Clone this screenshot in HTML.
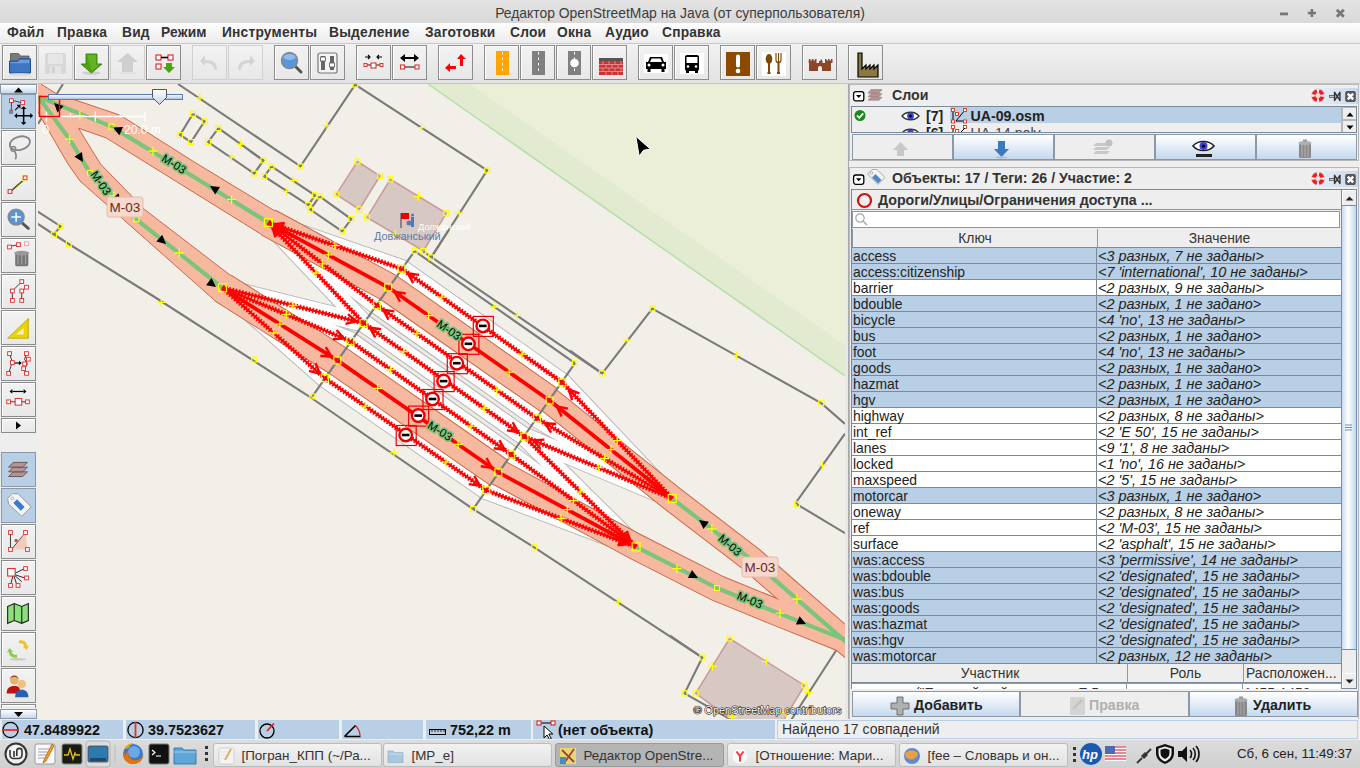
<!DOCTYPE html>
<html><head><meta charset="utf-8"><style>
*{box-sizing:border-box;margin:0;padding:0}
html,body{width:1360px;height:768px;overflow:hidden;background:#eeeeee;font-family:"Liberation Sans",sans-serif;position:relative}
.abs{position:absolute}
svg{display:block}
#title{left:0;top:0;width:1360px;height:23px;background:linear-gradient(#e4e4e4,#d8d8d8);color:#3c3c3c;font-size:13.9px;text-align:center;line-height:26px;padding-left:0}
#menu{left:0;top:23px;width:1360px;height:21px;background:linear-gradient(#fdfdfd,#ececec);border-bottom:1px solid #c8c8c8}
#menu span{position:absolute;top:2px;font-size:13.77px;font-weight:bold;color:#333;letter-spacing:0.2px}
#tb{left:0;top:44px;width:1360px;height:40px;background:linear-gradient(#f2f2f2,#e2e2e2);border-bottom:1px solid #c4c4c4}
.tbb{position:absolute;border:1px solid #8c8c8c;background:linear-gradient(#f2f2f2,#e8e8e8);box-shadow:inset 1px 1px 0 #fff}
.tbb.dis{border-color:#d0d0d0;box-shadow:none}
#lt{left:0;top:84px;width:38px;height:636px;background:#eeeeee}
.ltb{position:absolute;left:1px;width:35px;height:35px;border:1px solid #8c8c8c;background:linear-gradient(#f2f2f2,#e8e8e8);box-shadow:inset 1px 1px 0 #fff}
.ltb.act{background:#b8cfe5;border-color:#8a98a8;box-shadow:none}
.lsc{position:absolute;left:0;width:37px;border:1px solid #8a98a8;background:linear-gradient(#ffffff,#c5d9ee)}
#split{left:845px;top:84px;width:4px;height:636px;background:#e8e8e8;border-right:1px solid #a8a8a8}
.lbl{font-size:14.2px;font-weight:bold;color:#333;white-space:nowrap}
.th{background:#eeeeee;border-left:1px solid #8a98a8;border-bottom:1px solid #7a8a99;text-align:center;font-size:13.9px;color:#333;line-height:19px}
.tr{left:852px;width:489px;height:16px;border-bottom:1px solid #7a8a99;font-size:13.9px;color:#222;white-space:nowrap}
.tr .k{position:absolute;left:1px;top:0.5px;line-height:15px}
.tr .v{position:absolute;left:246px;top:0.5px;line-height:15px;font-style:italic;font-size:14.4px}
.sbb{background:#eeeeee;border:1px solid #b8b8b8}
.sf{position:absolute;top:720px;height:19px;background:#b8cfe5}
.sf span{position:absolute;top:1px;font-size:14.4px;font-weight:bold;color:#111;line-height:19px;white-space:nowrap}
</style></head><body>
<div id="title" class="abs">Редактор OpenStreetMap на Java (от суперпользователя)</div>
<svg class="abs" style="left:1270px;top:0px" width="90" height="22"><path d="M10 13.9h8" stroke="#777" stroke-width="2.8"/><path d="M37.8 13h8.2M41.9 8.9v8.2" stroke="#777" stroke-width="2.6"/><path d="M66.8 9.8l7 7M73.8 9.8l-7 7" stroke="#777" stroke-width="2.8"/></svg>
<div id="menu" class="abs">
<span style="left:7px">Файл</span><span style="left:57px">Правка</span><span style="left:122px">Вид</span><span style="left:161px">Режим</span><span style="left:222px">Инструменты</span><span style="left:329px">Выделение</span><span style="left:425px">Заготовки</span><span style="left:510px">Слои</span><span style="left:557px">Окна</span><span style="left:605px">Аудио</span><span style="left:662px">Справка</span>
</div>
<div id="tb" class="abs"></div>
<div class="tbb" style="left:2px;top:45px;width:35px;height:35px"><svg width="33" height="33" viewBox="0 0 33 33"><path d="M7.5 7.5h8l2 2.5h8.5v8H7.5z" fill="#7a7a7a" stroke="#555" stroke-width="0.8"/>
<path d="M6.5 15h8l2-2.2h11V27h-21z" fill="#3d76c2" stroke="#1f4f8f" stroke-width="1"/>
<path d="M7.5 16h7.2l2-2.2h9.8v3.5H7.5z" fill="#8ab4e6" opacity="0.6"/><ellipse cx="17" cy="28.5" rx="10" ry="1.3" fill="#d8d8d8"/></svg></div><div class="tbb dis" style="left:38px;top:45px;width:35px;height:35px"><svg width="33" height="33" viewBox="0 0 33 33"><rect x="6" y="7" width="21" height="21" rx="2" fill="#d8d8d8"/><rect x="9" y="8" width="15" height="10" fill="#e6e6e6"/><rect x="11" y="20" width="11" height="8" fill="#e4e4e4"/><rect x="13" y="21" width="3" height="6" fill="#d2d2d2"/></svg></div><div class="tbb" style="left:74px;top:45px;width:35px;height:35px"><svg width="33" height="33" viewBox="0 0 33 33"><ellipse cx="16.5" cy="27" rx="9" ry="1.8" fill="#ccc"/><path d="M11 8h11v10h5l-10.5 9L6 18h5z" fill="#4fa313" stroke="#3a7d10" stroke-width="0.9"/><path d="M12 9h9v10h3l-7 6z" fill="#6cc22a" opacity="0.6"/></svg></div><div class="tbb dis" style="left:110px;top:45px;width:35px;height:35px"><svg width="33" height="33" viewBox="0 0 33 33"><ellipse cx="16.5" cy="27" rx="9" ry="1.8" fill="#e2e2e2"/><path d="M11 26h11V16h5L16.5 7 6 16h5z" fill="#cfcfcf"/></svg></div><div class="tbb" style="left:146px;top:45px;width:35px;height:35px"><svg width="33" height="33" viewBox="0 0 33 33"><rect x="9" y="9" width="5" height="5" fill="#fff" stroke="#d33" stroke-width="1.2"/><rect x="21" y="9" width="5" height="5" fill="#fff" stroke="#d33" stroke-width="1.2"/><path d="M14 11.5h7" stroke="#000" stroke-width="1.6"/><rect x="9" y="18" width="5" height="5" fill="#fff" stroke="#d33" stroke-width="1.2"/><path d="M19 17h6v4h3l-6 6-6-6h3z" fill="#4fa313"/></svg></div><div class="tbb dis" style="left:192px;top:45px;width:35px;height:35px"><svg width="33" height="33" viewBox="0 0 33 33"><path d="M12 9l-5 6 5 5v-3c5 0 8 1 9 6 1 1 2 2 3 0 0-6-4-9-12-9z" fill="#d4d4d4"/></svg></div><div class="tbb dis" style="left:228px;top:45px;width:35px;height:35px"><svg width="33" height="33" viewBox="0 0 33 33"><path d="M21 9l5 6-5 5v-3c-5 0-8 1-9 6-1 1-2 2-3 0 0-6 4-9 12-9z" fill="#d4d4d4"/></svg></div><div class="tbb" style="left:274px;top:45px;width:35px;height:35px"><svg width="33" height="33" viewBox="0 0 33 33"><line x1="20" y1="20" x2="26" y2="26" stroke="#555" stroke-width="3" stroke-linecap="round"/><circle cx="14.5" cy="14.5" r="8" fill="#5a95db" stroke="#888" stroke-width="1.5"/><ellipse cx="14.5" cy="11" rx="6" ry="3" fill="#a8ccf2" opacity="0.7"/></svg></div><div class="tbb" style="left:310px;top:45px;width:35px;height:35px"><svg width="33" height="33" viewBox="0 0 33 33"><rect x="7" y="7" width="19" height="20" rx="2" fill="#f4f4f4" stroke="#777" stroke-width="1.2"/><rect x="10" y="10" width="4" height="14" fill="#666"/><rect x="19" y="10" width="4" height="14" fill="#666"/><rect x="9.5" y="11" width="5" height="4" fill="#fff" stroke="#555" stroke-width="0.8"/><rect x="18.5" y="17" width="5" height="4" fill="#fff" stroke="#555" stroke-width="0.8"/></svg></div><div class="tbb" style="left:356px;top:45px;width:35px;height:35px"><svg width="33" height="33" viewBox="0 0 33 33"><path d="M8 11h5M11 9l2 2-2 2M25 11h-5M22 9l-2 2 2 2" stroke="#000" stroke-width="1.1" fill="none"/><path d="M9 19h15" stroke="#222" stroke-width="1"/><rect x="7" y="17.5" width="3" height="3" fill="#fff" stroke="#d33" stroke-width="1"/><rect x="14" y="17" width="5" height="5" fill="#fff" stroke="#d33" stroke-width="1.1"/><rect x="23" y="17.5" width="3" height="3" fill="#fff" stroke="#d33" stroke-width="1"/></svg></div><div class="tbb" style="left:392px;top:45px;width:35px;height:35px"><svg width="33" height="33" viewBox="0 0 33 33"><path d="M10 12h14" stroke="#000" stroke-width="2"/><path d="M7 12l5-4v8zM26 12l-5-4v8z" fill="#000"/><path d="M10 21h13" stroke="#111" stroke-width="1"/><rect x="7.5" y="19" width="4" height="4" fill="#fff" stroke="#d33" stroke-width="1.1"/><rect x="22" y="19" width="4" height="4" fill="#fff" stroke="#d33" stroke-width="1.1"/></svg></div><div class="tbb" style="left:438px;top:45px;width:35px;height:35px"><svg width="33" height="33" viewBox="0 0 33 33"><path d="M22 8l-4 5h3v7h3v-7h3z" fill="#f00"/><path d="M6 22l5 4v-3h6v-3h-6v-3z" fill="#f00"/></svg></div><div class="tbb" style="left:484px;top:45px;width:35px;height:35px"><svg width="33" height="33" viewBox="0 0 33 33"><rect x="11" y="5" width="13" height="24" fill="#ffa500"/><path d="M17.5 6v22" stroke="#fff" stroke-width="1" stroke-dasharray="2.5 3"/></svg></div><div class="tbb" style="left:520px;top:45px;width:35px;height:35px"><svg width="33" height="33" viewBox="0 0 33 33"><rect x="11" y="5" width="13" height="24" fill="#808080"/><path d="M17.5 6v22" stroke="#fff" stroke-width="1" stroke-dasharray="2.5 3"/></svg></div><div class="tbb" style="left:556px;top:45px;width:35px;height:35px"><svg width="33" height="33" viewBox="0 0 33 33"><rect x="11" y="5" width="13" height="24" fill="#808080"/><path d="M17.5 6v22" stroke="#fff" stroke-width="1" stroke-dasharray="2.5 3"/><circle cx="17.5" cy="17" r="4.3" fill="#fff"/></svg></div><div class="tbb" style="left:592px;top:45px;width:35px;height:35px"><svg width="33" height="33" viewBox="0 0 33 33"><rect x="6" y="12" width="24" height="3" fill="#555"/><rect x="6" y="15" width="24" height="14" fill="#c33"/><path d="M6 18.5h24M6 22h24M6 25.5h24" stroke="#e8a0a0" stroke-width="0.8"/><path d="M10 15v3.5M16 15v3.5M22 15v3.5M28 15v3.5M13 18.5v3.5M19 18.5v3.5M25 18.5v3.5M10 22v3.5M16 22v3.5M22 22v3.5M28 22v3.5M13 25.5v3.5M19 25.5v3.5M25 25.5v3.5" stroke="#e8a0a0" stroke-width="0.8"/></svg></div><div class="tbb" style="left:638px;top:45px;width:35px;height:35px"><svg width="33" height="33" viewBox="0 0 33 33"><rect x="5" y="8" width="24" height="19" fill="#fff"/><path d="M9 16l2-5h12l2 5h2v7H7v-7z" fill="#000"/><path d="M11 16l1.5-3.5h9L23 16z" fill="#fff"/><circle cx="10" cy="19" r="1.5" fill="#fff"/><circle cx="24" cy="19" r="1.5" fill="#fff"/><rect x="8.5" y="23" width="3" height="3" fill="#000"/><rect x="22.5" y="23" width="3" height="3" fill="#000"/></svg></div><div class="tbb" style="left:674px;top:45px;width:35px;height:35px"><svg width="33" height="33" viewBox="0 0 33 33"><rect x="5" y="7" width="24" height="21" fill="#fff"/><rect x="10" y="9" width="14" height="16" rx="2" fill="#000"/><rect x="11.5" y="11" width="11" height="6" fill="#fff"/><circle cx="13" cy="20.5" r="1.3" fill="#fff"/><circle cx="21" cy="20.5" r="1.3" fill="#fff"/><rect x="11" y="24" width="3" height="3" fill="#000"/><rect x="20" y="24" width="3" height="3" fill="#000"/></svg></div><div class="tbb" style="left:720px;top:45px;width:35px;height:35px"><svg width="33" height="33" viewBox="0 0 33 33"><rect x="5" y="6" width="24" height="24" fill="#8b4a00"/><rect x="15" y="8.5" width="4" height="13" rx="2" fill="#fff"/><circle cx="17" cy="25" r="2.3" fill="#fff"/></svg></div><div class="tbb" style="left:756px;top:45px;width:35px;height:35px"><svg width="33" height="33" viewBox="0 0 33 33"><rect x="5" y="6" width="24" height="24" fill="#fff"/><ellipse cx="12" cy="13" rx="3.3" ry="5" fill="#7a4a0a"/><rect x="11" y="16" width="2" height="11" fill="#7a4a0a"/><rect x="10.5" y="26" width="3" height="2" fill="#7a4a0a"/><path d="M19 7v7c0 1.5 1 2.5 2 2.5h1c1 0 2-1 2-2.5V7" stroke="#7a4a0a" stroke-width="1.2" fill="none"/><path d="M21.5 7v8" stroke="#7a4a0a" stroke-width="1.1"/><rect x="20.5" y="15" width="2" height="12" fill="#7a4a0a"/><rect x="20" y="26" width="3" height="2" fill="#7a4a0a"/></svg></div><div class="tbb" style="left:802px;top:45px;width:35px;height:35px"><svg width="33" height="33" viewBox="0 0 33 33"><path d="M6 13h1.5v1.5H9V13h1.5v1.5H12V13h1.5v4h2.5v-2h1.5v-1.5H19V15h.5v2H22v-4h1.5v1.5H25V13h1.5v1.5H28V13h1.5v4H28v8H6v-8h-.5z" fill="#8b4726"/><path d="M15 25v-3a2 2 0 0 1 4 0v3z" fill="#eee"/></svg></div><div class="tbb" style="left:848px;top:45px;width:35px;height:35px"><svg width="33" height="33" viewBox="0 0 33 33"><path d="M9 7h4v16l4-4v4l4-4v4l4-4v4l4-4v12H9z" fill="#8b7a40" stroke="#000" stroke-width="1.2"/></svg></div>
<div id="lt" class="abs"></div>
<div class="ltb act" style="top:94px"><svg width="32" height="32" viewBox="0 0 34 34"><rect x="8" y="4" width="4" height="4" fill="#fff" stroke="#d33" stroke-width="1"/><rect x="20" y="6" width="4" height="4" fill="#fff" stroke="#d33" stroke-width="1"/><path d="M12 6l8 2M10 8v8" stroke="#333" stroke-width="0.9"/><rect x="8" y="16" width="3.5" height="3.5" fill="#888" stroke="#666" stroke-width="0.6"/><path d="M14 16l5-5M16 11h3v3" stroke="#000" stroke-width="1.2" fill="none"/><path d="M23 14v16M15 22h16" stroke="#000" stroke-width="1.6"/><path d="M23 12l-3 3h6zM23 32l-3-3h6zM13 22l3-3v6zM33 22l-3-3v6z" fill="#000"/></svg></div><div class="ltb" style="top:130px"><svg width="32" height="32" viewBox="0 0 34 34"><ellipse cx="19" cy="13" rx="11" ry="7" fill="none" stroke="#888" stroke-width="2" transform="rotate(-15 19 13)"/><circle cx="12" cy="19" r="2.5" fill="none" stroke="#888" stroke-width="1.5"/><path d="M13 21c2 3 3 6 1 9" stroke="#888" stroke-width="1.8" fill="none"/></svg></div><div class="ltb" style="top:166px"><svg width="32" height="32" viewBox="0 0 34 34"><path d="M9 26L25 12" stroke="#000" stroke-width="1.5"/><path d="M9 26L25 12" stroke="#ee0" stroke-width="0.6"/><rect x="21" y="8" width="7" height="7" fill="#ff8"/><rect x="22.5" y="9.5" width="4" height="4" fill="#fff" stroke="#d33" stroke-width="1.1"/><rect x="6.5" y="24" width="4" height="4" fill="#fff" stroke="#d33" stroke-width="1.1"/></svg></div><div class="ltb" style="top:202px"><svg width="32" height="32" viewBox="0 0 34 34"><line x1="20" y1="20" x2="28" y2="27" stroke="#555" stroke-width="3" stroke-linecap="round"/><circle cx="15" cy="15" r="8.5" fill="#5a95db" stroke="#888" stroke-width="1.5"/><path d="M15 10v10M10 15h10" stroke="#fff" stroke-width="1.6"/></svg></div><div class="ltb" style="top:238px"><svg width="32" height="32" viewBox="0 0 34 34"><rect x="14" y="15" width="14" height="14" rx="2" fill="#777"/><ellipse cx="21" cy="15" rx="8" ry="2.5" fill="#999"/><path d="M17 17v10M21 17v10M25 17v10" stroke="#aaa" stroke-width="1"/><path d="M8 8l9-2" stroke="#333" stroke-width="1"/><rect x="6" y="6.5" width="4" height="4" fill="#fff" stroke="#d33" stroke-width="1"/><rect x="15.5" y="4" width="4" height="4" fill="#fff" stroke="#d33" stroke-width="1"/><rect x="24" y="3" width="4" height="4" fill="#fff" stroke="#f99" stroke-width="1"/></svg></div><div class="ltb" style="top:274px"><svg width="32" height="32" viewBox="0 0 34 34"><path d="M11 17l10-10M21 17l5-4M11 17v10M21 17v10" stroke="#333" stroke-width="1"/><rect x="19" y="5" width="4" height="4" fill="#fff" stroke="#d33" stroke-width="1"/><rect x="24" y="11" width="4" height="4" fill="#fff" stroke="#d33" stroke-width="1"/><rect x="9" y="15" width="4" height="4" fill="#fff" stroke="#d33" stroke-width="1"/><rect x="19" y="15" width="4" height="4" fill="#fff" stroke="#d33" stroke-width="1"/><rect x="9" y="25" width="4" height="4" fill="#fff" stroke="#d33" stroke-width="1"/><rect x="19" y="25" width="4" height="4" fill="#fff" stroke="#d33" stroke-width="1"/></svg></div><div class="ltb" style="top:310px"><svg width="32" height="32" viewBox="0 0 34 34"><path d="M6 29L28 8v21z" fill="#e8d400" stroke="#b8a000" stroke-width="0.8"/><path d="M15 25l8-7v7z" fill="#eee"/></svg></div><div class="ltb" style="top:346px"><svg width="32" height="32" viewBox="0 0 34 34"><path d="M8 7l3 9-4 12M26 7l-2 6 3 5-3 5 2 5" stroke="#333" stroke-width="1" fill="none"/><path d="M13 17h7" stroke="#000" stroke-width="1.2"/><path d="M21 17l-3-2.5v5z" fill="#000"/><rect x="6" y="5" width="4" height="4" fill="#fff" stroke="#d33" stroke-width="1"/><rect x="9" y="14.5" width="4" height="4" fill="#fff" stroke="#d33" stroke-width="1"/><rect x="5" y="26" width="4" height="4" fill="#fff" stroke="#d33" stroke-width="1"/><rect x="24" y="5" width="4" height="4" fill="#fff" stroke="#d33" stroke-width="1"/><rect x="26" y="11" width="4" height="4" fill="#fff" stroke="#d33" stroke-width="1"/><rect x="22" y="16" width="4" height="4" fill="#fff" stroke="#d33" stroke-width="1"/><rect x="21" y="21" width="4" height="4" fill="#fff" stroke="#d33" stroke-width="1"/><rect x="24" y="26" width="4" height="4" fill="#fff" stroke="#d33" stroke-width="1"/></svg></div><div class="ltb" style="top:382px"><svg width="32" height="32" viewBox="0 0 34 34"><path d="M11 9h12" stroke="#000" stroke-width="1.3"/><path d="M8 9l3-2.5v5zM26 9l-3-2.5v5z" fill="#000"/><path d="M7 20h20" stroke="#333" stroke-width="1"/><rect x="5" y="18" width="4" height="4" fill="#fff" stroke="#d33" stroke-width="1"/><rect x="14" y="16.5" width="7" height="7" fill="#fff" stroke="#d33" stroke-width="1.1"/><rect x="25" y="18" width="4" height="4" fill="#fff" stroke="#d33" stroke-width="1"/></svg></div><div class="ltb act" style="top:452px"><svg width="32" height="32" viewBox="0 0 34 34"><path d="M7 25l5-5h15l-5 5z" fill="#b49494" stroke="#5a4a4a" stroke-width="0.9"/><path d="M7 20l5-5h15l-5 5z" fill="#b49494" stroke="#5a4a4a" stroke-width="0.9"/><path d="M7 15l5-5h15l-5 5z" fill="#b49494" stroke="#5a4a4a" stroke-width="0.9"/></svg></div><div class="ltb act" style="top:488px"><svg width="32" height="32" viewBox="0 0 34 34"><path d="M6 10l5-5h6l14 14-10 10L7 16z" fill="#f4f4f4" stroke="#999" stroke-width="1"/><circle cx="11" cy="10" r="1.5" fill="#fff" stroke="#999" stroke-width="0.8"/><path d="M12 15l8 8 4-4-8-8z" fill="#3a7cc8"/></svg></div><div class="ltb" style="top:524px"><svg width="32" height="32" viewBox="0 0 34 34"><path d="M9 8v18M25 8L10 26" stroke="#333" stroke-width="1"/><path d="M25 8l2 18H11z" fill="#f6c0b0" opacity="0.8"/><rect x="7" y="6" width="4" height="4" fill="#fff" stroke="#d33" stroke-width="1"/><rect x="23" y="6" width="4" height="4" fill="#fff" stroke="#d33" stroke-width="1"/><rect x="7" y="24" width="4" height="4" fill="#fff" stroke="#d33" stroke-width="1"/><rect x="25" y="24" width="4" height="4" fill="#fff" stroke="#d33" stroke-width="1"/><rect x="13.5" y="15" width="3" height="3" fill="#d33"/></svg></div><div class="ltb" style="top:560px"><svg width="32" height="32" viewBox="0 0 34 34"><path d="M12 14l12-6M12 14l12 4M12 14l-3 12M12 14l4 12M12 14l9 8" stroke="#222" stroke-width="1"/><rect x="6" y="8" width="8" height="8" fill="#fff" stroke="#d33" stroke-width="1.2"/><rect x="23" y="6" width="4" height="4" fill="#fff" stroke="#d33" stroke-width="1"/><rect x="24" y="16" width="4" height="4" fill="#fff" stroke="#d33" stroke-width="1"/><rect x="7" y="24" width="4" height="4" fill="#fff" stroke="#d33" stroke-width="1"/><rect x="15" y="24" width="4" height="4" fill="#fff" stroke="#d33" stroke-width="1"/></svg></div><div class="ltb" style="top:596px"><svg width="32" height="32" viewBox="0 0 34 34"><path d="M6 10l7-3 8 3 7-3v18l-7 3-8-3-7 3z" fill="#8be07a" stroke="#222" stroke-width="1.2"/><path d="M13 7v18M21 10v18" stroke="#222" stroke-width="1.2"/></svg></div><div class="ltb" style="top:632px"><svg width="32" height="32" viewBox="0 0 34 34"><path d="M18 8a7 7 0 0 1 9 6l2-1-3 5-4-4 2 .2a5 5 0 0 0-6-3z" fill="#f0c020"/><path d="M16 26a7 7 0 0 1-9-6l-2 1 3-5 4 4-2-.2a5 5 0 0 0 6 3z" fill="#8bd040"/><ellipse cx="17" cy="28" rx="9" ry="1.5" fill="#ccc"/></svg></div><div class="ltb" style="top:668px"><svg width="32" height="32" viewBox="0 0 34 34"><circle cx="13" cy="12" r="4.5" fill="#e8b070"/><path d="M8 12a5 5 0 0 1 10 0c0-5-10-5-10 0z" fill="#8a3a10"/><path d="M5 26c0-6 3-8 8-8s6 2 6 5v3z" fill="#c01010"/><circle cx="21" cy="16" r="4.5" fill="#f0c080"/><path d="M14 30c0-6 3-8 7-8s7 2 7 8z" fill="#2a60b0"/></svg></div><div class="lsc" style="top:84px;height:10px"><svg width="35" height="9"><path d="M13 7.5h9l-4.5-5z" fill="#000"/></svg></div><div class="ltb" style="top:418px;height:15px"><svg width="32" height="13"><path d="M14 2.5v8l5-4z" fill="#000"/></svg></div><div class="ltb" style="top:704px;height:4px;border-bottom:none"></div><div class="lsc" style="top:709px;height:10px"><svg width="35" height="9"><path d="M13 2h9l-4.5 5z" fill="#000"/></svg></div>
<svg class="abs" style="left:38px;top:84px" width="807" height="636" viewBox="38 84 807 636"><rect x="38" y="84" width="807" height="636" fill="#f2efe9"/><polygon points="428,84 845,84 845,376 " fill="#ecefd7"/><polygon points="428,84 470,84 845,345 845,376" fill="#e2ebcf"/><path d="M428 84L845 376" stroke="#b4dfa8" stroke-width="1.5"/><path d="M63.0,84.0 L38.0,124.0" stroke="#7a7a7a" stroke-width="2.1" fill="none"/><path d="M178.0,84.0 L300.5,166.4 L355.2,84.6 L487.2,170.4 L431.1,257.4" stroke="#7a7a7a" stroke-width="2.1" fill="none"/><path d="M218.4,128.2 L263.4,160.4 L254.3,173.5 L208.2,142.0 L218.4,128.2" stroke="#7a7a7a" stroke-width="2.1" fill="none"/><path d="M250.0,151.0 L263.4,160.4" stroke="#7a7a7a" stroke-width="2.1" fill="none"/><path d="M250.0,170.6 L254.3,173.5" stroke="#7a7a7a" stroke-width="2.1" fill="none"/><path d="M271.5,166.4 L315.1,195.3 L308.3,205.1 L264.3,176.4 L271.5,166.4" stroke="#7a7a7a" stroke-width="2.1" fill="none"/><path d="M319.6,196.4 L351.3,219.1 L342.2,231.4 L310.3,209.6 L319.6,196.4" stroke="#7a7a7a" stroke-width="2.1" fill="none"/><path d="M193.0,113.8 L204.6,121.3 L191.0,142.0 L180.0,135.0 L193.0,113.8" stroke="#7a7a7a" stroke-width="2.1" fill="none"/><path d="M37.0,211.0 L60.5,226.2 L54.0,234.5" stroke="#7a7a7a" stroke-width="2.1" fill="none"/><path d="M37.0,223.4 L54.0,234.5 L68.8,244.0 L153.0,296.0 L307.0,395.0 L473.2,509.1 L534.2,547.4 L702.3,657.5 L684.6,693.3 L727.3,717.7 L735.0,722.0" stroke="#7a7a7a" stroke-width="2.1" fill="none"/><path d="M670.0,635.6 L702.3,657.5" stroke="#7a7a7a" stroke-width="2.1" fill="none"/><path d="M414.6,251.0 L574.9,363.2" stroke="#7a7a7a" stroke-width="2.1" fill="none"/><path d="M423.2,251.3 L431.4,257.2 L601.9,373.4" stroke="#7a7a7a" stroke-width="2.1" fill="none"/><path d="M431.4,257.2 L448.7,230.0" stroke="#7a7a7a" stroke-width="2.1" fill="none"/><path d="M570.0,350.7 L602.3,373.4 L652.3,308.5 L821.2,403.2 L845.0,424.0" stroke="#7a7a7a" stroke-width="2.1" fill="none"/><path d="M845.0,433.6 L796.4,502.0 L797.0,504.3" stroke="#7a7a7a" stroke-width="2.1" fill="none"/><path d="M797.0,504.3 L845.0,533.2" stroke="#7a7a7a" stroke-width="2.1" fill="none"/><path d="M843.2,639.5 L791.1,720.0" stroke="#7a7a7a" stroke-width="2.1" fill="none"/><polygon points="357.4,161.5 380.0,176.0 359.3,209.4 336.3,194.4" fill="#d8c8c4" stroke="#c89c9a" stroke-width="1.6"/><polygon points="390.3,179.3 446.3,213.2 423.4,251.0 367.0,217.4" fill="#d8c8c4" stroke="#c89c9a" stroke-width="1.6"/><polygon points="729.5,638.5 804.5,685.4 783.3,720.5 732.5,720.5 695.7,693.3" fill="#d8c8c4" stroke="#c89c9a" stroke-width="1.6"/><g stroke="#b8b8b8" stroke-width="19.5" stroke-linecap="round" fill="none"><path d="M268.4 222.6L401.5 268.7" /><path d="M268.4 222.6L388.2 287.3" /><path d="M268.4 222.6L376.9 305.2" /><path d="M268.4 222.6L363.5 323.1" /><path d="M222.5 287.8L363.5 323.1" /><path d="M222.5 287.8L350.3 341.1" /><path d="M222.5 287.8L337.3 360.4" /><path d="M222.5 287.8L324.9 378.2" /><path d="M401.5 268.7L562.3 382.5" /><path d="M388.2 287.3L549.6 400.5" /><path d="M376.9 305.2L536.9 418.4" /><path d="M363.5 323.1L524.4 436.6" /><path d="M350.3 341.1L511.2 454.5" /><path d="M337.3 360.4L498.3 472.3" /><path d="M324.9 378.2L486.2 490.2" /><path d="M562.3 382.5L672.2 498.6" /><path d="M549.6 400.5L672.2 498.6" /><path d="M536.9 418.4L672.2 498.6" /><path d="M524.4 436.6L672.2 498.6" /><path d="M524.4 436.6L636.1 546.9" /><path d="M511.2 454.5L636.1 546.9" /><path d="M498.3 472.3L636.1 546.9" /><path d="M486.2 490.2L636.1 546.9" /></g><g stroke="#ffffff" stroke-width="17.5" stroke-linecap="round" fill="none"><path d="M268.4 222.6L401.5 268.7" /><path d="M268.4 222.6L388.2 287.3" /><path d="M268.4 222.6L376.9 305.2" /><path d="M268.4 222.6L363.5 323.1" /><path d="M222.5 287.8L363.5 323.1" /><path d="M222.5 287.8L350.3 341.1" /><path d="M222.5 287.8L337.3 360.4" /><path d="M222.5 287.8L324.9 378.2" /><path d="M401.5 268.7L562.3 382.5" /><path d="M388.2 287.3L549.6 400.5" /><path d="M376.9 305.2L536.9 418.4" /><path d="M363.5 323.1L524.4 436.6" /><path d="M350.3 341.1L511.2 454.5" /><path d="M337.3 360.4L498.3 472.3" /><path d="M324.9 378.2L486.2 490.2" /><path d="M562.3 382.5L672.2 498.6" /><path d="M549.6 400.5L672.2 498.6" /><path d="M536.9 418.4L672.2 498.6" /><path d="M524.4 436.6L672.2 498.6" /><path d="M524.4 436.6L636.1 546.9" /><path d="M511.2 454.5L636.1 546.9" /><path d="M498.3 472.3L636.1 546.9" /><path d="M486.2 490.2L636.1 546.9" /></g><g stroke="#b8b8b8" stroke-width="5" fill="none"><path d="M394.9 278.0L556.0 391.5"/><path d="M382.5 296.2L543.2 409.4"/><path d="M370.2 314.1L530.6 427.5"/><path d="M356.9 332.1L517.8 445.6"/><path d="M343.8 350.8L504.8 463.4"/><path d="M331.1 369.3L492.2 481.2"/></g><g stroke="#eeebe6" stroke-width="3" fill="none"><path d="M394.9 278.0L556.0 391.5"/><path d="M382.5 296.2L543.2 409.4"/><path d="M370.2 314.1L530.6 427.5"/><path d="M356.9 332.1L517.8 445.6"/><path d="M343.8 350.8L504.8 463.4"/><path d="M331.1 369.3L492.2 481.2"/></g><path d="M268.4,222.6 L388.2,287.3 L549.6,400.5" stroke="#c86848" stroke-width="29.5" fill="none" stroke-linejoin="miter" stroke-miterlimit="3"/><path d="M222.5,287.8 L337.3,360.4 L498.3,472.3" stroke="#c86848" stroke-width="31.5" fill="none" stroke-linejoin="miter" stroke-miterlimit="3"/><path d="M549.6,400.5 L672.2,498.6 L751.6,559.6 L842.3,638.6 L870.0,662.0" stroke="#c86848" stroke-width="26.5" fill="none" stroke-linejoin="miter" stroke-miterlimit="3"/><path d="M498.3,472.3 L636.1,546.9 L717.0,588.0 L779.6,613.6 L842.3,638.6 L870.0,650.0" stroke="#c86848" stroke-width="27" fill="none" stroke-linejoin="miter" stroke-miterlimit="3"/><path d="M268.4,222.6 L388.2,287.3 L549.6,400.5" stroke="#f7b8a0" stroke-width="27.5" fill="none" stroke-linejoin="miter" stroke-miterlimit="3"/><path d="M222.5,287.8 L337.3,360.4 L498.3,472.3" stroke="#f7b8a0" stroke-width="29.5" fill="none" stroke-linejoin="miter" stroke-miterlimit="3"/><path d="M549.6,400.5 L672.2,498.6 L751.6,559.6 L842.3,638.6 L870.0,662.0" stroke="#f7b8a0" stroke-width="24.5" fill="none" stroke-linejoin="miter" stroke-miterlimit="3"/><path d="M498.3,472.3 L636.1,546.9 L717.0,588.0 L779.6,613.6 L842.3,638.6 L870.0,650.0" stroke="#f7b8a0" stroke-width="25" fill="none" stroke-linejoin="miter" stroke-miterlimit="3"/><polygon points="37,84 41,84 56,93.5 120.3,115.25 194.4,162.1 274.9,211 261.9,234.7 106,137.8 78.4,128.2 100.5,164 144.7,209.6 230.4,275.3 214.6,300.3 80,181 68,164 39,114 37,110" fill="#f7b8a0"/><path d="M41 84L56 93.5L120.3 115.25L194.4 162.1L274.9 211M261.9 234.7L106 137.8L78.4 128.2L100.5 164L144.7 209.6L230.4 275.3M214.6 300.3L80 181L68 164L39 114L37 110" stroke="#c86848" stroke-width="1" fill="none"/><path d="M414.6,251.0 L312.4,396.3" stroke="#7a7a7a" stroke-width="2.1" fill="none"/><path d="M575.0,363.2 L473.2,509.1" stroke="#7a7a7a" stroke-width="2.1" fill="none"/><path d="M38.0,96.5 L111.5,126.6 L194.4,177.3 L268.4,222.6" stroke="#7bc47b" stroke-width="4.2" fill="none" stroke-linejoin="round"/><path d="M38.0,96.5 L69.6,139.2 L90.0,172.9 L136.4,219.3 L222.5,287.8" stroke="#7bc47b" stroke-width="4.2" fill="none" stroke-linejoin="round"/><path d="M672.2,498.6 L751.6,559.6 L842.3,638.6 L846.0,642.0" stroke="#7bc47b" stroke-width="4.2" fill="none" stroke-linejoin="round"/><path d="M636.1,546.9 L717.0,588.0 L779.6,613.6 L842.3,638.6 L846.0,640.0" stroke="#7bc47b" stroke-width="4.2" fill="none" stroke-linejoin="round"/><path d="M268.4 222.6L401.5 268.7" stroke="#f00" stroke-width="2.2"/><path d="M268.4 222.6L401.5 268.7" stroke="#f00" stroke-width="5" stroke-dasharray="1.7 1.6"/><path d="M268.4 222.6L388.2 287.3" stroke="#f00" stroke-width="3.8"/><path d="M268.4 222.6L376.9 305.2" stroke="#f00" stroke-width="2.2"/><path d="M268.4 222.6L376.9 305.2" stroke="#f00" stroke-width="5" stroke-dasharray="1.7 1.6"/><path d="M268.4 222.6L363.5 323.1" stroke="#f00" stroke-width="2.2"/><path d="M268.4 222.6L363.5 323.1" stroke="#f00" stroke-width="5" stroke-dasharray="1.7 1.6"/><path d="M222.5 287.8L363.5 323.1" stroke="#f00" stroke-width="2.2"/><path d="M222.5 287.8L363.5 323.1" stroke="#f00" stroke-width="5" stroke-dasharray="1.7 1.6"/><path d="M222.5 287.8L350.3 341.1" stroke="#f00" stroke-width="2.2"/><path d="M222.5 287.8L350.3 341.1" stroke="#f00" stroke-width="5" stroke-dasharray="1.7 1.6"/><path d="M222.5 287.8L337.3 360.4" stroke="#f00" stroke-width="3.8"/><path d="M222.5 287.8L324.9 378.2" stroke="#f00" stroke-width="2.2"/><path d="M222.5 287.8L324.9 378.2" stroke="#f00" stroke-width="5" stroke-dasharray="1.7 1.6"/><path d="M401.5 268.7L562.3 382.5" stroke="#f00" stroke-width="2.2"/><path d="M401.5 268.7L562.3 382.5" stroke="#f00" stroke-width="5" stroke-dasharray="1.7 1.6"/><path d="M388.2 287.3L549.6 400.5" stroke="#f00" stroke-width="3.8"/><path d="M376.9 305.2L536.9 418.4" stroke="#f00" stroke-width="2.2"/><path d="M376.9 305.2L536.9 418.4" stroke="#f00" stroke-width="5" stroke-dasharray="1.7 1.6"/><path d="M363.5 323.1L524.4 436.6" stroke="#f00" stroke-width="2.2"/><path d="M363.5 323.1L524.4 436.6" stroke="#f00" stroke-width="5" stroke-dasharray="1.7 1.6"/><path d="M350.3 341.1L511.2 454.5" stroke="#f00" stroke-width="2.2"/><path d="M350.3 341.1L511.2 454.5" stroke="#f00" stroke-width="5" stroke-dasharray="1.7 1.6"/><path d="M337.3 360.4L498.3 472.3" stroke="#f00" stroke-width="3.8"/><path d="M324.9 378.2L486.2 490.2" stroke="#f00" stroke-width="2.2"/><path d="M324.9 378.2L486.2 490.2" stroke="#f00" stroke-width="5" stroke-dasharray="1.7 1.6"/><path d="M562.3 382.5L672.2 498.6" stroke="#f00" stroke-width="2.2"/><path d="M562.3 382.5L672.2 498.6" stroke="#f00" stroke-width="5" stroke-dasharray="1.7 1.6"/><path d="M549.6 400.5L672.2 498.6" stroke="#f00" stroke-width="3.8"/><path d="M536.9 418.4L672.2 498.6" stroke="#f00" stroke-width="2.2"/><path d="M536.9 418.4L672.2 498.6" stroke="#f00" stroke-width="5" stroke-dasharray="1.7 1.6"/><path d="M524.4 436.6L672.2 498.6" stroke="#f00" stroke-width="2.2"/><path d="M524.4 436.6L672.2 498.6" stroke="#f00" stroke-width="5" stroke-dasharray="1.7 1.6"/><path d="M524.4 436.6L636.1 546.9" stroke="#f00" stroke-width="2.2"/><path d="M524.4 436.6L636.1 546.9" stroke="#f00" stroke-width="5" stroke-dasharray="1.7 1.6"/><path d="M511.2 454.5L636.1 546.9" stroke="#f00" stroke-width="2.2"/><path d="M511.2 454.5L636.1 546.9" stroke="#f00" stroke-width="5" stroke-dasharray="1.7 1.6"/><path d="M498.3 472.3L636.1 546.9" stroke="#f00" stroke-width="3.8"/><path d="M486.2 490.2L636.1 546.9" stroke="#f00" stroke-width="2.2"/><path d="M486.2 490.2L636.1 546.9" stroke="#f00" stroke-width="5" stroke-dasharray="1.7 1.6"/><path d="M284.8 223.0L273.7 224.4L281.5 232.4" stroke="#f00" stroke-width="2.4" fill="none"/><path d="M419.0 274.9L407.9 273.3L413.2 283.1" stroke="#f00" stroke-width="2.4" fill="none"/><path d="M579.4 393.3L568.9 389.5L572.1 400.2" stroke="#f00" stroke-width="2.4" fill="none"/><path d="M284.4 225.5L273.2 225.2L279.6 234.3" stroke="#f00" stroke-width="2.4" fill="none"/><path d="M405.7 293.5L394.7 291.8L400.0 301.7" stroke="#f00" stroke-width="2.4" fill="none"/><path d="M567.9 408.7L557.0 406.4L561.6 416.5" stroke="#f00" stroke-width="2.4" fill="none"/><path d="M283.7 228.0L272.7 225.9L277.7 235.9" stroke="#f00" stroke-width="2.4" fill="none"/><path d="M394.4 311.4L383.3 309.7L388.6 319.6" stroke="#f00" stroke-width="2.4" fill="none"/><path d="M556.2 424.0L545.0 423.2L551.1 432.6" stroke="#f00" stroke-width="2.4" fill="none"/><path d="M282.7 230.4L272.2 226.6L275.4 237.3" stroke="#f00" stroke-width="2.4" fill="none"/><path d="M544.4 439.6L533.3 440.3L540.6 448.8" stroke="#f00" stroke-width="2.4" fill="none"/><path d="M345.5 323.8L356.4 321.3L348.0 314.1" stroke="#f00" stroke-width="2.4" fill="none"/><path d="M619.9 537.9L630.5 541.4L626.9 530.8" stroke="#f00" stroke-width="2.4" fill="none"/><path d="M332.8 339.2L343.9 338.4L336.6 330.0" stroke="#f00" stroke-width="2.4" fill="none"/><path d="M493.7 448.3L504.8 450.0L499.5 440.1" stroke="#f00" stroke-width="2.4" fill="none"/><path d="M618.8 540.4L629.9 542.3L624.8 532.3" stroke="#f00" stroke-width="2.4" fill="none"/><path d="M320.4 355.7L331.6 356.8L325.8 347.2" stroke="#f00" stroke-width="2.4" fill="none"/><path d="M480.8 466.2L491.9 467.8L486.5 458.0" stroke="#f00" stroke-width="2.4" fill="none"/><path d="M618.0 542.8L629.2 543.2L622.8 534.0" stroke="#f00" stroke-width="2.4" fill="none"/><path d="M309.0 370.8L319.8 373.7L315.6 363.3" stroke="#f00" stroke-width="2.4" fill="none"/><path d="M468.7 484.1L479.7 485.7L474.4 475.9" stroke="#f00" stroke-width="2.4" fill="none"/><path d="M617.5 545.2L628.6 544.1L621.0 535.9" stroke="#f00" stroke-width="2.4" fill="none"/><path d="M506.9 430.4L518.0 432.1L512.7 422.2" stroke="#f00" stroke-width="2.4" fill="none"/><path d="M381.0 329.3L369.9 327.6L375.2 337.5" stroke="#f00" stroke-width="2.4" fill="none"/><path d="M330.4 245.6h9.0M334.9 241.1v9.0" stroke="#ff0" stroke-width="1.3"/><path d="M612.8 440.6h9.0M617.2 436.1v9.0" stroke="#ff0" stroke-width="1.3"/><path d="M323.8 254.9h9.0M328.3 250.4v9.0" stroke="#ff0" stroke-width="1.3"/><path d="M606.4 449.6h9.0M610.9 445.1v9.0" stroke="#ff0" stroke-width="1.3"/><path d="M318.1 263.9h9.0M322.6 259.4v9.0" stroke="#ff0" stroke-width="1.3"/><path d="M600.0 458.5h9.0M604.5 454.0v9.0" stroke="#ff0" stroke-width="1.3"/><path d="M311.4 272.9h9.0M315.9 268.4v9.0" stroke="#ff0" stroke-width="1.3"/><path d="M593.8 467.6h9.0M598.3 463.1v9.0" stroke="#ff0" stroke-width="1.3"/><path d="M288.5 305.5h9.0M293.0 301.0v9.0" stroke="#ff0" stroke-width="1.3"/><path d="M575.8 491.8h9.0M580.2 487.2v9.0" stroke="#ff0" stroke-width="1.3"/><path d="M281.9 314.5h9.0M286.4 310.0v9.0" stroke="#ff0" stroke-width="1.3"/><path d="M569.1 500.7h9.0M573.6 496.2v9.0" stroke="#ff0" stroke-width="1.3"/><path d="M275.4 324.1h9.0M279.9 319.6v9.0" stroke="#ff0" stroke-width="1.3"/><path d="M562.7 509.6h9.0M567.2 505.1v9.0" stroke="#ff0" stroke-width="1.3"/><path d="M269.2 333.0h9.0M273.7 328.5v9.0" stroke="#ff0" stroke-width="1.3"/><path d="M556.6 518.5h9.0M561.1 514.0v9.0" stroke="#ff0" stroke-width="1.3"/><path d="M437.2 297.1h9.0M441.7 292.6v9.0" stroke="#ff0" stroke-width="1.3"/><path d="M517.6 354.1h9.0M522.1 349.6v9.0" stroke="#ff0" stroke-width="1.3"/><path d="M424.1 315.6h9.0M428.6 311.1v9.0" stroke="#ff0" stroke-width="1.3"/><path d="M504.8 372.2h9.0M509.2 367.7v9.0" stroke="#ff0" stroke-width="1.3"/><path d="M412.4 333.5h9.0M416.9 329.0v9.0" stroke="#ff0" stroke-width="1.3"/><path d="M492.4 390.1h9.0M496.9 385.6v9.0" stroke="#ff0" stroke-width="1.3"/><path d="M399.2 351.5h9.0M403.7 347.0v9.0" stroke="#ff0" stroke-width="1.3"/><path d="M479.7 408.2h9.0M484.2 403.7v9.0" stroke="#ff0" stroke-width="1.3"/><path d="M386.0 369.5h9.0M390.5 365.0v9.0" stroke="#ff0" stroke-width="1.3"/><path d="M466.5 426.1h9.0M471.0 421.6v9.0" stroke="#ff0" stroke-width="1.3"/><path d="M373.1 388.4h9.0M377.6 383.9v9.0" stroke="#ff0" stroke-width="1.3"/><path d="M453.6 444.3h9.0M458.1 439.8v9.0" stroke="#ff0" stroke-width="1.3"/><path d="M360.7 406.2h9.0M365.2 401.7v9.0" stroke="#ff0" stroke-width="1.3"/><path d="M441.4 462.2h9.0M445.9 457.7v9.0" stroke="#ff0" stroke-width="1.3"/><rect x="398.0" y="265.2" width="7" height="7" fill="none" stroke="#ff0" stroke-width="1.2"/><rect x="384.7" y="283.8" width="7" height="7" fill="none" stroke="#ff0" stroke-width="1.2"/><rect x="373.4" y="301.7" width="7" height="7" fill="none" stroke="#ff0" stroke-width="1.2"/><rect x="360.0" y="319.6" width="7" height="7" fill="none" stroke="#ff0" stroke-width="1.2"/><rect x="346.8" y="337.6" width="7" height="7" fill="none" stroke="#ff0" stroke-width="1.2"/><rect x="333.8" y="356.9" width="7" height="7" fill="none" stroke="#ff0" stroke-width="1.2"/><rect x="321.4" y="374.7" width="7" height="7" fill="none" stroke="#ff0" stroke-width="1.2"/><rect x="558.8" y="379.0" width="7" height="7" fill="none" stroke="#ff0" stroke-width="1.2"/><rect x="546.1" y="397.0" width="7" height="7" fill="none" stroke="#ff0" stroke-width="1.2"/><rect x="533.4" y="414.9" width="7" height="7" fill="none" stroke="#ff0" stroke-width="1.2"/><rect x="520.9" y="433.1" width="7" height="7" fill="none" stroke="#ff0" stroke-width="1.2"/><rect x="507.7" y="451.0" width="7" height="7" fill="none" stroke="#ff0" stroke-width="1.2"/><rect x="494.8" y="468.8" width="7" height="7" fill="none" stroke="#ff0" stroke-width="1.2"/><rect x="482.7" y="486.7" width="7" height="7" fill="none" stroke="#ff0" stroke-width="1.2"/><rect x="264.4" y="218.6" width="8" height="8" fill="none" stroke="#ff0" stroke-width="1.2"/><rect x="218.5" y="283.8" width="8" height="8" fill="none" stroke="#ff0" stroke-width="1.2"/><rect x="668.2" y="494.6" width="8" height="8" fill="none" stroke="#ff0" stroke-width="1.2"/><rect x="632.1" y="542.9" width="8" height="8" fill="none" stroke="#ff0" stroke-width="1.2"/><rect x="190.5" y="111.3" width="5" height="5" fill="none" stroke="#ff0" stroke-width="1.2"/><rect x="202.1" y="118.8" width="5" height="5" fill="none" stroke="#ff0" stroke-width="1.2"/><rect x="188.5" y="139.5" width="5" height="5" fill="none" stroke="#ff0" stroke-width="1.2"/><rect x="177.5" y="132.5" width="5" height="5" fill="none" stroke="#ff0" stroke-width="1.2"/><rect x="215.9" y="125.7" width="5" height="5" fill="none" stroke="#ff0" stroke-width="1.2"/><rect x="260.9" y="157.9" width="5" height="5" fill="none" stroke="#ff0" stroke-width="1.2"/><rect x="251.8" y="171.0" width="5" height="5" fill="none" stroke="#ff0" stroke-width="1.2"/><rect x="205.7" y="139.5" width="5" height="5" fill="none" stroke="#ff0" stroke-width="1.2"/><rect x="298.0" y="163.9" width="5" height="5" fill="none" stroke="#ff0" stroke-width="1.2"/><rect x="269.0" y="163.9" width="5" height="5" fill="none" stroke="#ff0" stroke-width="1.2"/><rect x="312.6" y="192.8" width="5" height="5" fill="none" stroke="#ff0" stroke-width="1.2"/><rect x="305.8" y="202.6" width="5" height="5" fill="none" stroke="#ff0" stroke-width="1.2"/><rect x="261.8" y="173.9" width="5" height="5" fill="none" stroke="#ff0" stroke-width="1.2"/><rect x="317.1" y="193.9" width="5" height="5" fill="none" stroke="#ff0" stroke-width="1.2"/><rect x="348.8" y="216.6" width="5" height="5" fill="none" stroke="#ff0" stroke-width="1.2"/><rect x="339.7" y="228.9" width="5" height="5" fill="none" stroke="#ff0" stroke-width="1.2"/><rect x="307.8" y="207.1" width="5" height="5" fill="none" stroke="#ff0" stroke-width="1.2"/><rect x="352.7" y="82.1" width="5" height="5" fill="none" stroke="#ff0" stroke-width="1.2"/><rect x="484.7" y="167.9" width="5" height="5" fill="none" stroke="#ff0" stroke-width="1.2"/><rect x="428.6" y="254.9" width="5" height="5" fill="none" stroke="#ff0" stroke-width="1.2"/><rect x="354.9" y="159.0" width="5" height="5" fill="none" stroke="#ff0" stroke-width="1.2"/><rect x="377.5" y="173.5" width="5" height="5" fill="none" stroke="#ff0" stroke-width="1.2"/><rect x="356.8" y="206.9" width="5" height="5" fill="none" stroke="#ff0" stroke-width="1.2"/><rect x="333.8" y="191.9" width="5" height="5" fill="none" stroke="#ff0" stroke-width="1.2"/><rect x="387.8" y="176.8" width="5" height="5" fill="none" stroke="#ff0" stroke-width="1.2"/><rect x="443.8" y="210.7" width="5" height="5" fill="none" stroke="#ff0" stroke-width="1.2"/><rect x="420.9" y="248.5" width="5" height="5" fill="none" stroke="#ff0" stroke-width="1.2"/><rect x="364.5" y="214.9" width="5" height="5" fill="none" stroke="#ff0" stroke-width="1.2"/><rect x="412.1" y="248.5" width="5" height="5" fill="none" stroke="#ff0" stroke-width="1.2"/><rect x="420.7" y="248.8" width="5" height="5" fill="none" stroke="#ff0" stroke-width="1.2"/><rect x="58.0" y="223.7" width="5" height="5" fill="none" stroke="#ff0" stroke-width="1.2"/><rect x="51.5" y="232.0" width="5" height="5" fill="none" stroke="#ff0" stroke-width="1.2"/><rect x="66.3" y="241.5" width="5" height="5" fill="none" stroke="#ff0" stroke-width="1.2"/><rect x="251.8" y="357.1" width="5" height="5" fill="none" stroke="#ff0" stroke-width="1.2"/><rect x="309.9" y="393.8" width="5" height="5" fill="none" stroke="#ff0" stroke-width="1.2"/><rect x="470.7" y="506.6" width="5" height="5" fill="none" stroke="#ff0" stroke-width="1.2"/><rect x="531.7" y="544.9" width="5" height="5" fill="none" stroke="#ff0" stroke-width="1.2"/><rect x="572.4" y="360.7" width="5" height="5" fill="none" stroke="#ff0" stroke-width="1.2"/><rect x="599.4" y="370.9" width="5" height="5" fill="none" stroke="#ff0" stroke-width="1.2"/><rect x="649.8" y="306.0" width="5" height="5" fill="none" stroke="#ff0" stroke-width="1.2"/><rect x="818.7" y="400.7" width="5" height="5" fill="none" stroke="#ff0" stroke-width="1.2"/><rect x="794.5" y="501.8" width="5" height="5" fill="none" stroke="#ff0" stroke-width="1.2"/><rect x="699.8" y="655.0" width="5" height="5" fill="none" stroke="#ff0" stroke-width="1.2"/><rect x="682.1" y="690.8" width="5" height="5" fill="none" stroke="#ff0" stroke-width="1.2"/><rect x="727.0" y="636.0" width="5" height="5" fill="none" stroke="#ff0" stroke-width="1.2"/><rect x="802.0" y="682.9" width="5" height="5" fill="none" stroke="#ff0" stroke-width="1.2"/><rect x="693.2" y="690.8" width="5" height="5" fill="none" stroke="#ff0" stroke-width="1.2"/><rect x="109.0" y="124.1" width="5" height="5" fill="none" stroke="#ff0" stroke-width="1.2"/><rect x="87.5" y="170.4" width="5" height="5" fill="none" stroke="#ff0" stroke-width="1.2"/><rect x="133.9" y="216.8" width="5" height="5" fill="none" stroke="#ff0" stroke-width="1.2"/><rect x="714.5" y="585.5" width="5" height="5" fill="none" stroke="#ff0" stroke-width="1.2"/><rect x="749.1" y="557.1" width="5" height="5" fill="none" stroke="#ff0" stroke-width="1.2"/><path d="M195.4 97.8h9.0M199.9 93.3v9.0" stroke="#ff0" stroke-width="1.3"/><path d="M236.3 144.2h9.0M240.8 139.7v9.0" stroke="#ff0" stroke-width="1.3"/><path d="M227.1 157.2h9.0M231.6 152.7v9.0" stroke="#ff0" stroke-width="1.3"/><path d="M289.1 180.3h9.0M293.6 175.8v9.0" stroke="#ff0" stroke-width="1.3"/><path d="M281.9 191.4h9.0M286.4 186.9v9.0" stroke="#ff0" stroke-width="1.3"/><path d="M148.5 151.0h9.0M153.0 146.5v9.0" stroke="#ff0" stroke-width="1.3"/><path d="M227.1 199.4h9.0M231.6 194.9v9.0" stroke="#ff0" stroke-width="1.3"/><path d="M75.3 115.7h9.0M79.8 111.2v9.0" stroke="#ff0" stroke-width="1.3"/><path d="M65.1 139.2h9.0M69.6 134.7v9.0" stroke="#ff0" stroke-width="1.3"/><path d="M109.3 195.8h9.0M113.8 191.3v9.0" stroke="#ff0" stroke-width="1.3"/><path d="M174.7 253.0h9.0M179.2 248.5v9.0" stroke="#ff0" stroke-width="1.3"/><path d="M322.5 125.4h9.0M327.0 120.9v9.0" stroke="#ff0" stroke-width="1.3"/><path d="M417.0 127.6h9.0M421.5 123.1v9.0" stroke="#ff0" stroke-width="1.3"/><path d="M413.7 196.6h9.0M418.2 192.1v9.0" stroke="#ff0" stroke-width="1.3"/><path d="M454.8 213.2h9.0M459.3 208.7v9.0" stroke="#ff0" stroke-width="1.3"/><path d="M390.7 234.5h9.0M395.2 230.0v9.0" stroke="#ff0" stroke-width="1.3"/><path d="M156.8 302.4h9.0M161.3 297.9v9.0" stroke="#ff0" stroke-width="1.3"/><path d="M489.5 307.0h9.0M494.0 302.5v9.0" stroke="#ff0" stroke-width="1.3"/><path d="M512.8 315.4h9.0M517.3 310.9v9.0" stroke="#ff0" stroke-width="1.3"/><path d="M389.4 452.9h9.0M393.9 448.4v9.0" stroke="#ff0" stroke-width="1.3"/><path d="M622.9 340.2h9.0M627.4 335.7v9.0" stroke="#ff0" stroke-width="1.3"/><path d="M732.0 355.4h9.0M736.5 350.9v9.0" stroke="#ff0" stroke-width="1.3"/><path d="M817.8 465.3h9.0M822.3 460.8v9.0" stroke="#ff0" stroke-width="1.3"/><path d="M707.4 529.0h9.0M711.9 524.5v9.0" stroke="#ff0" stroke-width="1.3"/><path d="M672.5 568.7h9.0M677.0 564.2v9.0" stroke="#ff0" stroke-width="1.3"/><path d="M613.7 601.9h9.0M618.2 597.4v9.0" stroke="#ff0" stroke-width="1.3"/><path d="M775.5 613.2h9.0M780.0 608.7v9.0" stroke="#ff0" stroke-width="1.3"/><path d="M792.5 599.0h9.0M797.0 594.5v9.0" stroke="#ff0" stroke-width="1.3"/><path d="M707.8 666.2h9.0M712.3 661.7v9.0" stroke="#ff0" stroke-width="1.3"/><path d="M761.9 661.4h9.0M766.4 656.9v9.0" stroke="#ff0" stroke-width="1.3"/><path d="M803.9 692.3h9.0M808.4 687.8v9.0" stroke="#ff0" stroke-width="1.3"/><path d="M781.6 712.4h9.0M786.1 707.9v9.0" stroke="#ff0" stroke-width="1.3"/><path d="M727.7 717.0h9.0M732.2 712.5v9.0" stroke="#ff0" stroke-width="1.3"/><path d="M63.6 105.9L54.0 103.0L57.5 112.4z" fill="#000"/><path d="M123.0 127.0L113.0 127.5L119.4 135.2z" fill="#000"/><path d="M220.0 187.0L210.0 186.0L215.2 194.6z" fill="#000"/><path d="M74.4 156.8L83.0 162.0L82.0 152.0z" fill="#000"/><path d="M111.7 199.1L121.0 203.0L118.6 193.2z" fill="#000"/><path d="M206.1 285.2L216.0 287.0L211.5 278.0z" fill="#000"/><path d="M156.3 241.5L166.0 244.0L162.2 234.7z" fill="#000"/><path d="M708.9 521.8L699.0 520.0L703.5 529.0z" fill="#000"/><path d="M687.9 578.0L698.0 578.0L692.0 570.0z" fill="#000"/><path d="M795.9 624.5L806.0 624.0L799.6 616.2z" fill="#000"/><rect x="473.3" y="316.4" width="20" height="20" fill="none" stroke="#e00" stroke-width="1.2"/><circle cx="482.8" cy="325.9" r="6.3" fill="#fff" stroke="#e00" stroke-width="2.4"/><rect x="479.0" y="324.6" width="7.6" height="2.6" fill="#000"/><rect x="458.9" y="334.3" width="20" height="20" fill="none" stroke="#e00" stroke-width="1.2"/><circle cx="468.4" cy="343.8" r="6.3" fill="#fff" stroke="#e00" stroke-width="2.4"/><rect x="464.6" y="342.5" width="7.6" height="2.6" fill="#000"/><rect x="447.3" y="353.7" width="20" height="20" fill="none" stroke="#e00" stroke-width="1.2"/><circle cx="456.8" cy="363.2" r="6.3" fill="#fff" stroke="#e00" stroke-width="2.4"/><rect x="453.0" y="361.9" width="7.6" height="2.6" fill="#000"/><rect x="434.1" y="371.6" width="20" height="20" fill="none" stroke="#e00" stroke-width="1.2"/><circle cx="443.6" cy="381.1" r="6.3" fill="#fff" stroke="#e00" stroke-width="2.4"/><rect x="439.8" y="379.8" width="7.6" height="2.6" fill="#000"/><rect x="423.0" y="389.5" width="20" height="20" fill="none" stroke="#e00" stroke-width="1.2"/><circle cx="432.5" cy="399.0" r="6.3" fill="#fff" stroke="#e00" stroke-width="2.4"/><rect x="428.7" y="397.7" width="7.6" height="2.6" fill="#000"/><rect x="408.7" y="406.1" width="20" height="20" fill="none" stroke="#e00" stroke-width="1.2"/><circle cx="418.2" cy="415.6" r="6.3" fill="#fff" stroke="#e00" stroke-width="2.4"/><rect x="414.4" y="414.3" width="7.6" height="2.6" fill="#000"/><rect x="396.2" y="425.5" width="20" height="20" fill="none" stroke="#e00" stroke-width="1.2"/><circle cx="405.7" cy="435.0" r="6.3" fill="#fff" stroke="#e00" stroke-width="2.4"/><rect x="401.9" y="433.7" width="7.6" height="2.6" fill="#000"/><g transform="translate(174,164) rotate(32)"><text x="0" y="4" text-anchor="middle" font-family="Liberation Sans" font-size="11.5" fill="#000" stroke="#7bc47b" stroke-width="3.5" paint-order="stroke" stroke-linejoin="round">M-03</text></g><g transform="translate(101,183) rotate(56)"><text x="0" y="4" text-anchor="middle" font-family="Liberation Sans" font-size="11.5" fill="#000" stroke="#7bc47b" stroke-width="3.5" paint-order="stroke" stroke-linejoin="round">M-03</text></g><g transform="translate(449,330) rotate(34)"><text x="0" y="4" text-anchor="middle" font-family="Liberation Sans" font-size="11.5" fill="#000" stroke="#7bc47b" stroke-width="3.5" paint-order="stroke" stroke-linejoin="round">M-03</text></g><g transform="translate(440,431) rotate(32)"><text x="0" y="4" text-anchor="middle" font-family="Liberation Sans" font-size="11.5" fill="#000" stroke="#7bc47b" stroke-width="3.5" paint-order="stroke" stroke-linejoin="round">M-03</text></g><g transform="translate(730,545) rotate(40)"><text x="0" y="4" text-anchor="middle" font-family="Liberation Sans" font-size="11.5" fill="#000" stroke="#7bc47b" stroke-width="3.5" paint-order="stroke" stroke-linejoin="round">M-03</text></g><g transform="translate(750,600) rotate(22)"><text x="0" y="4" text-anchor="middle" font-family="Liberation Sans" font-size="11.5" fill="#000" stroke="#7bc47b" stroke-width="3.5" paint-order="stroke" stroke-linejoin="round">M-03</text></g><rect x="107" y="197" width="36" height="20" rx="2.5" fill="#f6d8cf" stroke="#e8b8ac" stroke-width="1"/><text x="125" y="212" text-anchor="middle" font-family="Liberation Sans" font-size="13.5" fill="#6a2a1a">M-03</text><rect x="742" y="557" width="36" height="20" rx="2.5" fill="#f6d8cf" stroke="#e8b8ac" stroke-width="1"/><text x="760" y="572" text-anchor="middle" font-family="Liberation Sans" font-size="13.5" fill="#6a2a1a">M-03</text><path d="M401 213v15" stroke="#555" stroke-width="1.2"/><rect x="401" y="213" width="8" height="6" fill="#e00"/><circle cx="409" cy="223" r="2.5" fill="#5a7ab0"/><rect x="411" y="217" width="3" height="10" fill="#4a7ac0"/><circle cx="412.5" cy="215" r="1.5" fill="#4a7ac0"/><text x="418" y="229.5" font-family="Liberation Sans" font-size="9.3" fill="#fff">Должанский</text><text x="374" y="239.5" font-family="Liberation Sans" font-size="10.9" fill="#5a7ab0">Довжанський</text><path d="M46 116.5h99M46.4 111.5v10M70.5 113.5v4M95.3 111.5v10M120.3 113.5v4M145 111.5v10" stroke="#fff" stroke-width="1.3"/><text x="42.5" y="133.5" font-family="Liberation Sans" font-size="12" fill="#fff">0</text><text x="124" y="133.5" font-family="Liberation Sans" font-size="12" fill="#fff">20.0 m</text><rect x="39.5" y="96.5" width="20" height="20" fill="none" stroke="#f00" stroke-width="1.5"/><defs><linearGradient id="sl" x1="0" y1="0" x2="0" y2="1"><stop offset="0" stop-color="#fff"/><stop offset="1" stop-color="#a8c0e0"/></linearGradient><linearGradient id="th" x1="0" y1="0" x2="0" y2="1"><stop offset="0" stop-color="#fff"/><stop offset="1" stop-color="#c0d4ec"/></linearGradient></defs><rect x="48.5" y="94.5" width="134" height="5" fill="url(#sl)" stroke="#5a7ab0" stroke-width="1"/><path d="M152.5 89.5h14v8l-7 7-7-7z" fill="url(#th)" stroke="#555" stroke-width="1"/><text x="693.5" y="714" font-family="Liberation Sans" font-size="10.9" fill="#fff" stroke="#111" stroke-width="1.1" paint-order="stroke">© OpenStreetMap contributors</text><path d="M635.8 136.3L650.5 149.2L643.5 150.2L639.2 156.2Z" fill="#000" stroke="#fff" stroke-width="1" stroke-linejoin="round"/></svg>
<div id="split" class="abs"></div>
<div class="abs" style="left:849px;top:84px;width:510px;height:77px;border:1px solid #b8b8b8;border-left:1px solid #b8b8b8;background:#eeeeee"></div><svg class="abs" style="left:852px;top:88px" width="32" height="14" viewBox="0 0 32 14"><rect x="1.6" y="3.6" width="10.2" height="9.3" rx="2.2" fill="#fff" stroke="#000" stroke-width="1.3"/><path d="M4 6.9h5.4l-2.7 3z" fill="#000"/><path d="M16 12.2l3-3h11l-3 3z M16 8.7l3-3h11l-3 3z M16 5.2l3-3.6h11l-3 3.6z" fill="#b49494" stroke="#8a6a6a" stroke-width="0.5"/></svg><div class="abs lbl" style="left:892px;top:86.5px">Слои</div><div class="abs" style="left:1310px;top:88px;width:48px;height:16px;background:linear-gradient(90deg,#eef3f8,#c5d8ec)"></div>
<svg class="abs" style="left:1310px;top:88px" width="48" height="16" viewBox="0 0 48 16">
<circle cx="8" cy="7.6" r="4.5" fill="none" stroke="#f4f4f4" stroke-width="4.2"/><path d="M14.43 9.08A6.6 6.6 0 0 1 9.48 14.03L8.54 9.94A2.4 2.4 0 0 0 10.34 8.14z" fill="#ee2020"/><path d="M6.52 14.03A6.6 6.6 0 0 1 1.57 9.08L5.66 8.14A2.4 2.4 0 0 0 7.46 9.94z" fill="#ee2020"/><path d="M1.57 6.12A6.6 6.6 0 0 1 6.52 1.17L7.46 5.26A2.4 2.4 0 0 0 5.66 7.06z" fill="#ee2020"/><path d="M9.48 1.17A6.6 6.6 0 0 1 14.43 6.12L10.34 7.06A2.4 2.4 0 0 0 8.54 5.26z" fill="#ee2020"/><circle cx="8" cy="7.6" r="6.7" fill="none" stroke="#c8c8c8" stroke-width="0.5"/><circle cx="8" cy="7.6" r="2.3" fill="#dde6ee" stroke="#bbb" stroke-width="0.5"/><path d="M19 8.4h5.5" stroke="#333" stroke-width="2.4"/><path d="M19.5 8.4h5" stroke="#eee" stroke-width="0.9"/><path d="M24.5 4.2v8.4l2.8-4.2zM30 4.2v8.4l-2.8-4.2z" stroke="#333" stroke-width="1.3" fill="#bbb" stroke-linejoin="round"/>
<rect x="35.2" y="3.1" width="10.6" height="10.8" rx="2" fill="#555"/><path d="M37.8 5.7l5.4 5.6M43.2 5.7l-5.4 5.6" stroke="#fff" stroke-width="2.6"/>
</svg><div class="abs" style="left:851px;top:106px;width:506px;height:27px;border:1px solid #7a8a99;background:#eeeeee;overflow:hidden"><div class="abs" style="left:98px;top:0;width:391px;height:16px;background:#b8cfe5"></div><svg class="abs" style="left:0;top:0" width="120" height="27"><circle cx="8" cy="8.5" r="5.5" fill="#1a8a1a"/><path d="M5 8.5l2.2 2.3 4-4.5" stroke="#fff" stroke-width="1.8" fill="none"/><path d="M50 9c4-5 13-5 17 0-4 5-13 5-17 0z" fill="#fff" stroke="#333" stroke-width="1.3"/><circle cx="58.5" cy="9" r="3.4" fill="#4040d0"/><circle cx="58.5" cy="9" r="1.3" fill="#000"/><path d="M50 26c4-5 13-5 17 0" fill="#fff" stroke="#333" stroke-width="1.3"/><circle cx="58.5" cy="26" r="3.4" fill="#4040d0"/><path d="M101 2v13M113 3l-9 11h9" stroke="#000" stroke-width="1" fill="none"/><rect x="99.5" y="1.5" width="3" height="3" fill="#fff" stroke="#e03010" stroke-width="0.9"/><rect x="111.5" y="1.5" width="3" height="3" fill="#fff" stroke="#e03010" stroke-width="0.9"/><rect x="99.5" y="13" width="3" height="3" fill="#fff" stroke="#e03010" stroke-width="0.9"/><rect x="111.5" y="13" width="3" height="3" fill="#fff" stroke="#e03010" stroke-width="0.9"/><rect x="103.5" y="5.5" width="3" height="3" fill="#fff" stroke="#e03010" stroke-width="0.9"/><path d="M101 19v8" stroke="#000" stroke-width="1"/><rect x="99.5" y="18.5" width="3" height="3" fill="#fff" stroke="#e03010" stroke-width="0.9"/><rect x="111.5" y="18.5" width="3" height="3" fill="#fff" stroke="#e03010" stroke-width="0.9"/><rect x="103.5" y="22.5" width="3" height="3" fill="#fff" stroke="#e03010" stroke-width="0.9"/><path d="M113 21l-6 6" stroke="#000" stroke-width="1"/></svg><div class="abs" style="left:74px;top:0.5px;font-size:14.2px;font-weight:bold;color:#222">[7]</div><div class="abs" style="left:118.5px;top:0.5px;font-size:14.2px;font-weight:bold;color:#222">UA-09.osm</div><div class="abs" style="left:74px;top:17.5px;font-size:14.2px;font-weight:bold;color:#222">[6]</div><div class="abs" style="left:118.5px;top:17.5px;font-size:14.2px;color:#444">UA-14.poly</div><div class="abs" style="left:489px;top:0;width:16px;height:26px;background:#eee;border-left:1px solid #b8b8b8"><div class="abs sbb" style="left:0;top:0;width:15px;height:13px"><svg width="15" height="13"><path d="M3.5 8.5h7l-3.5-4z" fill="#000"/></svg></div><div class="abs sbb" style="left:0;top:13px;width:15px;height:13px"><svg width="15" height="13"><path d="M3.5 4.5h7l-3.5 4z" fill="#000"/></svg></div></div></div><div class="abs" style="left:852px;top:134px;width:101px;height:26px;border:1px solid #8a98a8;background:#eeeeee"><svg width="100" height="25"><path d="M44 21h7v-6h4l-7.5-8-7.5 8h4z" fill="#c8c8c8"/></svg></div><div class="abs" style="left:953px;top:134px;width:101px;height:26px;border:1px solid #8a98a8;background:linear-gradient(#ffffff,#c5d9ee)"><svg width="100" height="25"><path d="M44 6h7v8h4l-7.5 8-7.5-8h4z" fill="#3c78c0"/><ellipse cx="47.5" cy="22.5" rx="6" ry="1.2" fill="#a9c0d8"/></svg></div><div class="abs" style="left:1054px;top:134px;width:101px;height:26px;border:1px solid #8a98a8;background:#eeeeee"><svg width="100" height="25"><path d="M38 19l3-3h14l-3 3zM38 15l3-3h14l-3 3zM38 11l3-3h14l-3 3z" fill="#c8c8c8"/><circle cx="54" cy="8" r="3.5" fill="#c0c0c0"/></svg></div><div class="abs" style="left:1155px;top:134px;width:101px;height:26px;border:1px solid #8a98a8;background:linear-gradient(#ffffff,#c5d9ee)"><svg width="100" height="25"><path d="M37 11c5-6 16-6 21 0-5 6-16 6-21 0z" fill="#fff" stroke="#222" stroke-width="1.6"/><circle cx="47.5" cy="11" r="4" fill="#4040d0"/><circle cx="47.5" cy="11" r="1.6" fill="#000"/><rect x="40" y="19" width="16" height="3" fill="#222"/></svg></div><div class="abs" style="left:1256px;top:134px;width:101px;height:26px;border:1px solid #8a98a8;background:linear-gradient(#ffffff,#c5d9ee)"><svg width="100" height="25"><rect x="42" y="8" width="12" height="15" rx="1.5" fill="#8a8a8a"/><ellipse cx="48" cy="8" rx="6.5" ry="2" fill="#b0b0b0"/><path d="M45 10v12M48 10v12M51 10v12" stroke="#b4b4b4" stroke-width="1"/><rect x="46" y="4.5" width="4" height="2" fill="#999"/></svg></div><div class="abs" style="left:849px;top:167px;width:510px;height:553px;border:1px solid #b8b8b8;border-bottom:none;background:#eeeeee"></div><svg class="abs" style="left:852px;top:168px" width="34" height="20" viewBox="0 0 34 20"><rect x="1.6" y="7" width="10.2" height="9.3" rx="2.2" fill="#fff" stroke="#000" stroke-width="1.3"/><path d="M4 10.3h5.4l-2.7 3z" fill="#000"/><path d="M15.5 6l4.5-4.5h5l8 8-7 7-10.5-10.5z" fill="#f4f4f4" stroke="#aaa" stroke-width="1"/><circle cx="19.5" cy="5" r="1.3" fill="#fff" stroke="#999" stroke-width="0.7"/><path d="M20 9.5l6 6 3.5-3.5-6-6z" fill="#4a88d0"/></svg><div class="abs lbl" style="left:892px;top:169.5px">Объекты: 17 / Теги: 26 / Участие: 2</div><div class="abs" style="left:1310px;top:171px;width:48px;height:16px;background:linear-gradient(90deg,#eef3f8,#c5d8ec)"></div>
<svg class="abs" style="left:1310px;top:171px" width="48" height="16" viewBox="0 0 48 16">
<circle cx="8" cy="7.6" r="4.5" fill="none" stroke="#f4f4f4" stroke-width="4.2"/><path d="M14.43 9.08A6.6 6.6 0 0 1 9.48 14.03L8.54 9.94A2.4 2.4 0 0 0 10.34 8.14z" fill="#ee2020"/><path d="M6.52 14.03A6.6 6.6 0 0 1 1.57 9.08L5.66 8.14A2.4 2.4 0 0 0 7.46 9.94z" fill="#ee2020"/><path d="M1.57 6.12A6.6 6.6 0 0 1 6.52 1.17L7.46 5.26A2.4 2.4 0 0 0 5.66 7.06z" fill="#ee2020"/><path d="M9.48 1.17A6.6 6.6 0 0 1 14.43 6.12L10.34 7.06A2.4 2.4 0 0 0 8.54 5.26z" fill="#ee2020"/><circle cx="8" cy="7.6" r="6.7" fill="none" stroke="#c8c8c8" stroke-width="0.5"/><circle cx="8" cy="7.6" r="2.3" fill="#dde6ee" stroke="#bbb" stroke-width="0.5"/><path d="M19 8.4h5.5" stroke="#333" stroke-width="2.4"/><path d="M19.5 8.4h5" stroke="#eee" stroke-width="0.9"/><path d="M24.5 4.2v8.4l2.8-4.2zM30 4.2v8.4l-2.8-4.2z" stroke="#333" stroke-width="1.3" fill="#bbb" stroke-linejoin="round"/>
<rect x="35.2" y="3.1" width="10.6" height="10.8" rx="2" fill="#555"/><path d="M37.8 5.7l5.4 5.6M43.2 5.7l-5.4 5.6" stroke="#fff" stroke-width="2.6"/>
</svg><div class="abs" style="left:851px;top:189px;width:506px;height:500px;border:1px solid #7a8a99;background:#eeeeee;overflow:hidden"></div><svg class="abs" style="left:855px;top:191px" width="20" height="19"><circle cx="9.5" cy="9.5" r="6.5" fill="none" stroke="#d01010" stroke-width="2.2"/></svg><div class="abs lbl" style="left:878px;top:191.5px">Дороги/Улицы/Ограничения доступа ...</div><div class="abs" style="left:852px;top:209px;width:489px;height:1px;background:#8a98a8"></div><div class="abs" style="left:852px;top:211px;width:488px;height:17px;background:#fff;border:1px solid #8a98a8"><svg width="20" height="16"><circle cx="7" cy="6" r="4.2" fill="none" stroke="#aaa" stroke-width="1.2"/><path d="M10 9l4 4" stroke="#aaa" stroke-width="1.6"/></svg></div><div class="abs th" style="left:852px;top:229px;width:245px;height:19px">Ключ</div><div class="abs th" style="left:1097px;top:229px;width:244px;height:19px">Значение</div><div class="abs tr" style="top:248px;background:#b8cfe5"><span class="k">access</span><span class="v">&lt;3 разных, 7 не заданы&gt;</span></div><div class="abs tr" style="top:264px;background:#b8cfe5"><span class="k">access:citizenship</span><span class="v">&lt;7 'international', 10 не заданы&gt;</span></div><div class="abs tr" style="top:280px;background:#ffffff"><span class="k">barrier</span><span class="v">&lt;2 разных, 9 не заданы&gt;</span></div><div class="abs tr" style="top:296px;background:#b8cfe5"><span class="k">bdouble</span><span class="v">&lt;2 разных, 1 не задано&gt;</span></div><div class="abs tr" style="top:312px;background:#b8cfe5"><span class="k">bicycle</span><span class="v">&lt;4 'no', 13 не заданы&gt;</span></div><div class="abs tr" style="top:328px;background:#b8cfe5"><span class="k">bus</span><span class="v">&lt;2 разных, 1 не задано&gt;</span></div><div class="abs tr" style="top:344px;background:#b8cfe5"><span class="k">foot</span><span class="v">&lt;4 'no', 13 не заданы&gt;</span></div><div class="abs tr" style="top:360px;background:#b8cfe5"><span class="k">goods</span><span class="v">&lt;2 разных, 1 не задано&gt;</span></div><div class="abs tr" style="top:376px;background:#b8cfe5"><span class="k">hazmat</span><span class="v">&lt;2 разных, 1 не задано&gt;</span></div><div class="abs tr" style="top:392px;background:#b8cfe5"><span class="k">hgv</span><span class="v">&lt;2 разных, 1 не задано&gt;</span></div><div class="abs tr" style="top:408px;background:#ffffff"><span class="k">highway</span><span class="v">&lt;2 разных, 8 не заданы&gt;</span></div><div class="abs tr" style="top:424px;background:#ffffff"><span class="k">int_ref</span><span class="v">&lt;2 'E 50', 15 не заданы&gt;</span></div><div class="abs tr" style="top:440px;background:#ffffff"><span class="k">lanes</span><span class="v">&lt;9 '1', 8 не заданы&gt;</span></div><div class="abs tr" style="top:456px;background:#ffffff"><span class="k">locked</span><span class="v">&lt;1 'no', 16 не заданы&gt;</span></div><div class="abs tr" style="top:472px;background:#ffffff"><span class="k">maxspeed</span><span class="v">&lt;2 '5', 15 не заданы&gt;</span></div><div class="abs tr" style="top:488px;background:#b8cfe5"><span class="k">motorcar</span><span class="v">&lt;3 разных, 1 не задано&gt;</span></div><div class="abs tr" style="top:504px;background:#ffffff"><span class="k">oneway</span><span class="v">&lt;2 разных, 8 не заданы&gt;</span></div><div class="abs tr" style="top:520px;background:#ffffff"><span class="k">ref</span><span class="v">&lt;2 'M-03', 15 не заданы&gt;</span></div><div class="abs tr" style="top:536px;background:#ffffff"><span class="k">surface</span><span class="v">&lt;2 'asphalt', 15 не заданы&gt;</span></div><div class="abs tr" style="top:552px;background:#b8cfe5"><span class="k">was:access</span><span class="v">&lt;3 'permissive', 14 не заданы&gt;</span></div><div class="abs tr" style="top:568px;background:#b8cfe5"><span class="k">was:bdouble</span><span class="v">&lt;2 'designated', 15 не заданы&gt;</span></div><div class="abs tr" style="top:584px;background:#b8cfe5"><span class="k">was:bus</span><span class="v">&lt;2 'designated', 15 не заданы&gt;</span></div><div class="abs tr" style="top:600px;background:#b8cfe5"><span class="k">was:goods</span><span class="v">&lt;2 'designated', 15 не заданы&gt;</span></div><div class="abs tr" style="top:616px;background:#b8cfe5"><span class="k">was:hazmat</span><span class="v">&lt;2 'designated', 15 не заданы&gt;</span></div><div class="abs tr" style="top:632px;background:#b8cfe5"><span class="k">was:hgv</span><span class="v">&lt;2 'designated', 15 не заданы&gt;</span></div><div class="abs tr" style="top:648px;background:#b8cfe5"><span class="k">was:motorcar</span><span class="v">&lt;2 разных, 12 не заданы&gt;</span></div><div class="abs" style="left:1096px;top:248px;width:1px;height:416px;background:#7a8a99"></div><div class="abs th" style="left:852px;top:664px;width:276px;height:19px;border-left:none">Участник</div><div class="abs th" style="left:1127px;top:664px;width:116px;height:19px">Роль</div><div class="abs th" style="left:1243px;top:664px;width:98px;height:19px;text-align:left;padding-left:2px">Расположен...</div><div class="abs" style="left:852px;top:683px;width:489px;height:6px;background:#fff;overflow:hidden;border-top:1px solid #8a98a8"><div style="position:absolute;left:2px;top:1px;font-size:13.9px;color:#333;white-space:nowrap">маршрут ("Европейский автошлях Е 5</div><div style="position:absolute;left:392px;top:1px;font-size:13.9px;color:#333;white-space:nowrap">1455-1458, к</div><div style="position:absolute;left:274px;top:0;width:1px;height:7px;background:#8a98a8"></div><div style="position:absolute;left:390px;top:0;width:1px;height:7px;background:#8a98a8"></div></div><div class="abs" style="left:1341px;top:190px;width:15px;height:498px;background:#eeeeee;border-left:1px solid #7a8a99"></div><div class="abs" style="left:1342px;top:190px;width:14px;height:15px;background:#eeeeee;border-top:1px solid #fff;border-left:1px solid #fff"><svg width="14" height="15"><path d="M2.5 9.5h8l-4-4z" fill="#222"/></svg></div><div class="abs" style="left:1341px;top:205px;width:16px;height:445px;border:1px solid #6a8ec0;background:linear-gradient(90deg,#c8daf0,#ffffff 45%,#c0d4ec)"><svg width="13" height="443" style="position:absolute;left:0;top:0"><path d="M3 219h7M3 221.5h7M3 224h7" stroke="#6a8ec0" stroke-width="1"/></svg></div><div class="abs" style="left:1342px;top:673px;width:14px;height:15px;background:#eeeeee;border-top:1px solid #fff;border-left:1px solid #fff"><svg width="14" height="15"><path d="M2.5 5.5h8l-4 4z" fill="#222"/></svg></div><div class="abs" style="left:852px;top:691px;width:168px;height:26px;border:1px solid #8a98a8;background:linear-gradient(#ffffff,#c5d9ee)"><svg class="abs" style="left:0;top:0" width="168" height="26"><path d="M44 5h6v6h6v6h-6v6h-6v-6h-6v-6h6z" fill="#b0b0b0" stroke="#666" stroke-width="0.9"/></svg><div class="abs" style="left:61px;top:4.5px;font-size:14.2px;font-weight:bold;color:#222">Добавить</div></div><div class="abs" style="left:1020px;top:691px;width:169px;height:26px;border:1px solid #8a98a8;background:#eeeeee"><svg class="abs" style="left:0;top:0" width="169" height="26"><rect x="49" y="5" width="15" height="18" rx="1" fill="#d4d4d4"/><path d="M52 17l9-9" stroke="#c0c0c0" stroke-width="2"/></svg><div class="abs" style="left:68px;top:4.5px;font-size:14.2px;font-weight:bold;color:#b0b0b0">Правка</div></div><div class="abs" style="left:1189px;top:691px;width:169px;height:26px;border:1px solid #8a98a8;background:linear-gradient(#ffffff,#c5d9ee)"><svg class="abs" style="left:0;top:0" width="169" height="26"><rect x="45" y="8" width="12" height="16" rx="1.5" fill="#888"/><ellipse cx="51" cy="8" rx="6.5" ry="2" fill="#aaa"/><path d="M48 10v13M51 10v13M54 10v13" stroke="#aaa" stroke-width="1"/><rect x="49" y="4.5" width="4" height="2" fill="#999"/></svg><div class="abs" style="left:63px;top:4.5px;font-size:14.2px;font-weight:bold;color:#222">Удалить</div></div>
<div class="abs" style="left:0;top:719px;width:1360px;height:21px;background:#eeeeee"></div><div class="abs sf" style="left:2px;width:121px"><svg class="abs" style="left:-1px;top:0.5px" width="20" height="18"><circle cx="9.5" cy="9" r="7.6" fill="none" stroke="#000" stroke-width="1.3"/><path d="M1.5 9h16" stroke="#e8301a" stroke-width="1.8"/></svg><span style="left:22px">47.8489922</span></div><div class="abs sf" style="left:126px;width:129px"><svg class="abs" style="left:0px;top:0.5px" width="20" height="18"><circle cx="9.5" cy="9" r="7.6" fill="none" stroke="#000" stroke-width="1.3"/><path d="M9.5 1v16" stroke="#e8301a" stroke-width="1.8"/></svg><span style="left:22px">39.7523627</span></div><div class="abs sf" style="left:258px;width:81px"><svg class="abs" style="left:0;top:1px" width="20" height="18"><circle cx="9" cy="10" r="7" fill="none" stroke="#000" stroke-width="1.3"/><path d="M9 10L16 2.5" stroke="#e02020" stroke-width="1.8"/></svg></div><div class="abs sf" style="left:342px;width:81px"><svg class="abs" style="left:1px;top:1px" width="22" height="18"><path d="M1.5 15.5h16M1.5 15.5L12.5 4.5" stroke="#000" stroke-width="1.6" fill="none"/><path d="M12.5 4.5A15.5 15.5 0 0 1 17 15" stroke="#e02020" stroke-width="1.2" fill="none"/></svg></div><div class="abs sf" style="left:426px;width:105px"><svg class="abs" style="left:2px;top:2px" width="22" height="16"><rect x="1.5" y="7.5" width="16" height="5" fill="none" stroke="#000" stroke-width="1"/><path d="M4 7.5v2.5M7 7.5v2.5M10 7.5v2.5M13 7.5v2.5M16 7.5v2.5" stroke="#000" stroke-width="0.8"/></svg><span style="left:24px">752,22 m</span></div><div class="abs sf" style="left:533px;width:242px"><svg class="abs" style="left:2px;top:0" width="22" height="19"><path d="M5 3h13" stroke="#000" stroke-width="1"/><rect x="2" y="1" width="4" height="4" fill="#fff" stroke="#e02020" stroke-width="1.1"/><rect x="16" y="1" width="4" height="4" fill="#fff" stroke="#e02020" stroke-width="1.1"/><path d="M9 6v12l3-3 2.5 4.5 1.8-1-2.5-4.5h4z" fill="#fff" stroke="#000" stroke-width="1"/></svg><span style="left:25px">(нет объекта)</span></div><div class="abs" style="left:777px;top:720px;width:581px;height:19px;background:#eeeeee;border:1px solid #b8cfe5;font-size:14px;color:#333;line-height:17px;padding-left:4px">Найдено 17 совпадений</div>
<div class="abs" style="left:0;top:740px;width:1360px;height:28px;background:linear-gradient(#dcdcdc,#d0d0d0)"></div><svg class="abs" style="left:0;top:740px" width="212" height="28">
<circle cx="16" cy="14" r="10.5" fill="#f2f2f2" stroke="#333" stroke-width="2"/><path d="M10 10v5a3.5 3.5 0 0 0 3.5 3.5h5a3.5 3.5 0 0 0 3.5-3.5v-4a2.6 2.6 0 0 0-5.2 0v5M14 11v6" stroke="#333" stroke-width="1.6" fill="none"/>
<rect x="35" y="4" width="20" height="20" rx="2" fill="#fafafa" stroke="#999" stroke-width="1"/><path d="M38 9h12M38 12h12M38 15h10M38 18h8" stroke="#88a" stroke-width="0.8"/><path d="M52 4l-8 16-1 3 3-2 8-15z" fill="#f0a020" stroke="#a06010" stroke-width="0.7"/>
<rect x="62" y="4" width="20" height="20" rx="2" fill="#1a1a10" stroke="#888" stroke-width="1"/><path d="M64 15h4l2-6 3 10 2-6 1 2h4" stroke="#e0c020" stroke-width="1.3" fill="none"/>
<rect x="86" y="1" width="24" height="26" rx="3" fill="#dcdcdc" stroke="#aaa" stroke-width="0.8"/><rect x="88" y="6" width="20" height="16" rx="1.5" fill="#2c7ab0" stroke="#444" stroke-width="0.8"/><rect x="90" y="18" width="16" height="3" fill="#1a4a70"/>
<path d="M115 5v18" stroke="#bbb" stroke-width="1"/>
<circle cx="133" cy="14" r="10" fill="#3a78c8"/><circle cx="134" cy="12" r="6" fill="#6aa8e8"/><path d="M123.5 12c-1 6 3 12 9.5 12 6 0 10-4 10.5-9-2 4-6 6-10 5-4-1-6-5-5-9-2 1-3 3-3 5-1-2-1-4-2-4z" fill="#e8700a"/><path d="M124 9c2-4 6-6 10-6-3 1-5 3-5 5z" fill="#f0a020"/><rect x="149" y="4" width="20" height="20" rx="2" fill="#111" stroke="#777" stroke-width="1"/><path d="M152 10l3 2.5-3 2.5M156 16h5" stroke="#fff" stroke-width="1.2" fill="none"/>
<path d="M174 8h8l2 2h12v14h-22z" fill="#5ea6d8" stroke="#2a6a9a" stroke-width="0.8"/><path d="M174 12h22" stroke="#9cd0f0" stroke-width="1"/>
<rect x="205" y="6" width="3" height="3" fill="#333"/><rect x="205" y="12" width="3" height="3" fill="#333"/><rect x="205" y="18" width="3" height="3" fill="#333"/>
</svg><div class="abs" style="left:213px;top:743px;width:169px;height:24px;border:1px solid #bcbcbc;border-radius:3px;background:linear-gradient(#f2f2f2,#e2e2e2)"><svg class="abs" style="left:0;top:0" width="32" height="24"><rect x="5" y="4" width="15" height="16" rx="1.5" fill="#f4f4f4" stroke="#c8c8c8" stroke-width="0.8"/><path d="M7 8h10M7 11h10M7 14h8" stroke="#d8d8e8" stroke-width="0.7"/><path d="M17 5l-6 11" stroke="#e0b050" stroke-width="1.8"/></svg><div class="abs" style="left:27.5px;top:3.5px;font-size:13.4px;color:#333;white-space:nowrap">[Погран_КПП (~/Ра...</div></div><div class="abs" style="left:383px;top:743px;width:169px;height:24px;border:1px solid #bcbcbc;border-radius:3px;background:linear-gradient(#f2f2f2,#e2e2e2)"><svg class="abs" style="left:0;top:0" width="32" height="24"><path d="M4 7h5l1.5 1.5H19v10H4z" fill="#a8c8e0" stroke="#8aa8c0" stroke-width="0.6"/><path d="M4 10h15" stroke="#cfe3f0" stroke-width="0.8"/></svg><div class="abs" style="left:27.5px;top:3.5px;font-size:13.4px;color:#333;white-space:nowrap">[MP_e]</div></div><div class="abs" style="left:555px;top:743px;width:169px;height:24px;border:1px solid #9a9a9a;border-radius:3px;background:#b4b4b4"><svg class="abs" style="left:0;top:0" width="32" height="24"><rect x="4" y="4" width="16" height="16" fill="#e8d870"/><path d="M6 6l12 12M18 5l-9 13" stroke="#a04040" stroke-width="1.8"/><path d="M4 13h6v7H4z" fill="#4a8ac0"/></svg><div class="abs" style="left:27.5px;top:3.5px;font-size:13.4px;color:#333;white-space:nowrap">Редактор OpenStre...</div></div><div class="abs" style="left:727px;top:743px;width:169px;height:24px;border:1px solid #bcbcbc;border-radius:3px;background:linear-gradient(#f2f2f2,#e2e2e2)"><svg class="abs" style="left:0;top:0" width="32" height="24"><circle cx="12" cy="12" r="8" fill="#f8f8f8" stroke="#e4e4e4" stroke-width="0.6"/><path d="M8.5 7.5l3.5 4.5 3.5-4.5M12 12v5.5" stroke="#f03a3a" stroke-width="2" fill="none"/></svg><div class="abs" style="left:27.5px;top:3.5px;font-size:13.4px;color:#333;white-space:nowrap">[Отношение: Мари...</div></div><div class="abs" style="left:899px;top:743px;width:169px;height:24px;border:1px solid #bcbcbc;border-radius:3px;background:linear-gradient(#f2f2f2,#e2e2e2)"><svg class="abs" style="left:0;top:0" width="32" height="24"><circle cx="12" cy="12" r="8" fill="#5a8ad8"/><path d="M5 10c3-5 10-5 13 0-2 6-8 8-13 2z" fill="#e8a040"/></svg><div class="abs" style="left:27.5px;top:3.5px;font-size:13.4px;color:#333;white-space:nowrap">[fee – Словарь и он...</div></div><svg class="abs" style="left:1070px;top:740px" width="140" height="28">
<rect x="3" y="7" width="3" height="3" fill="#333"/><rect x="3" y="13" width="3" height="3" fill="#333"/><rect x="3" y="19" width="3" height="3" fill="#333"/>
<circle cx="21" cy="14" r="11" fill="#1a5ab0"/><text x="12" y="19" font-family="Liberation Sans" font-size="13" font-style="italic" font-weight="bold" fill="#fff">hp</text>
<rect x="35" y="6" width="21" height="15" fill="#fff"/><path d="M35 7h21M35 10h21M35 13h21M35 16h21M35 19h21" stroke="#e06070" stroke-width="1.5"/><rect x="35" y="6" width="10" height="8" fill="#4a6ab8"/>
<path d="M67 23l5-5M76 14l5-5" stroke="#333" stroke-width="1.8"/><path d="M71 16l4-4 3 3-4 4z" fill="#333"/>
<path d="M86 7l9-3 9 3v6c0 6-4 9-9 11-5-2-9-5-9-11z" fill="#111"/><path d="M88.5 8.5l6.5-2 6.5 2v4.5c0 4.5-3 7-6.5 8.5-3.5-1.5-6.5-4-6.5-8.5z" fill="#eee"/><path d="M90.5 9.8l4.5-1.4 4.5 1.4v3.2c0 3.2-2 5-4.5 6-2.5-1-4.5-2.8-4.5-6z" fill="#111"/>
<path d="M108 11h4l5-5v16l-5-5h-4z" fill="#111"/><path d="M120 10c2 2 2 6 0 8M123 8c3 3 3 9 0 12M126 6c4 4 4 12 0 16" stroke="#111" stroke-width="1.6" fill="none"/>
</svg><div class="abs" style="left:1237px;top:745.5px;font-size:13.3px;color:#222;white-space:nowrap">Сб, 6 сен, 11:49:37</div>
</body></html>
